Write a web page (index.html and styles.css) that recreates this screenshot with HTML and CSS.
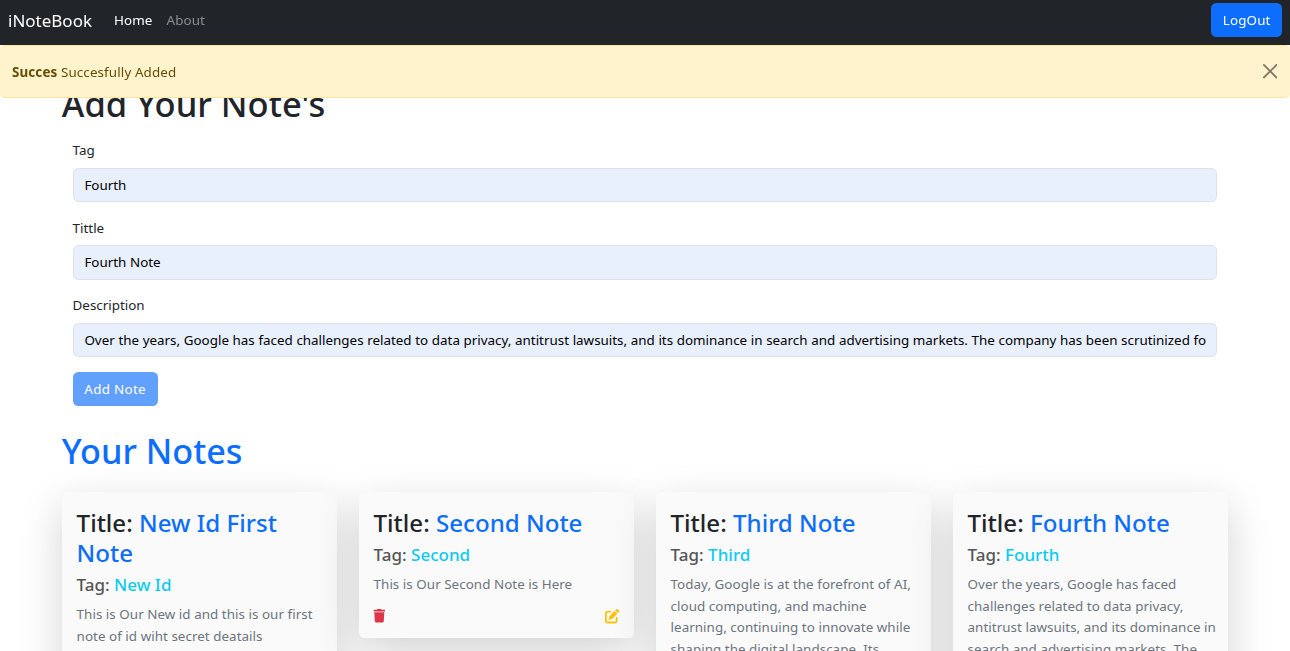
FILE: index.html
```html
<!DOCTYPE html>
<html lang="en">
<head>
<meta charset="utf-8">
<title>iNoteBook</title>
<link rel="stylesheet" href="styles.css">
</head>
<body>
<header class="top">
  <nav class="navbar">
    <a class="brand">iNoteBook</a>
    <a class="nav-link active">Home</a>
    <a class="nav-link">About</a>
    <button class="btn logout">LogOut</button>
  </nav>
  <div class="alert" role="alert">
    <span><strong>Succes</strong> Succesfully Added</span>
    <svg class="close" viewBox="0 0 16 16"><path d="M.293.293a1 1 0 0 1 1.414 0L8 6.586 14.293.293a1 1 0 1 1 1.414 1.414L9.414 8l6.293 6.293a1 1 0 0 1-1.414 1.414L8 9.414l-6.293 6.293a1 1 0 0 1-1.414-1.414L6.586 8 .293 1.707a1 1 0 0 1 0-1.414z"/></svg>
  </div>
</header>
<main class="container">
  <h1 class="heading">Add Your Note's</h1>
  <form class="form">
    <label class="label" for="tag">Tag</label>
    <input class="input" id="tag" value="Fourth">
    <label class="label" for="title">Tittle</label>
    <input class="input" id="title" value="Fourth Note">
    <label class="label" for="desc">Description</label>
    <input class="input" id="desc" value="Over the years, Google has faced challenges related to data privacy, antitrust lawsuits, and its dominance in search and advertising markets. The company has been scrutinized for its practices.">
    <button class="btn add" type="button" disabled>Add Note</button>
  </form>
  <h1 class="heading notes-heading">Your Notes</h1>
  <section class="notes">
    <article class="card">
      <h3 class="title">Title: <span class="title-value">New Id First Note</span></h3>
      <h5 class="tag">Tag: <span class="tag-value">New Id</span></h5>
      <p class="text">This is Our New id and this is our first<br>note of id wiht secret deatails</p>
      <div class="actions">
        <svg class="trash" viewBox="0 0 448 512"><path d="M135 18C140 7 151 0 164 0h120c12 0 23 7 29 18l7 14h96c18 0 32 14 32 32s-14 32-32 32H32C14 96 0 82 0 64s14-32 32-32h96zM32 128h384l-21 339c-2 25-23 45-48 45H101c-25 0-46-20-48-45z"/></svg>
      </div>
    </article>
    <article class="card">
      <h3 class="title">Title: <span class="title-value">Second Note</span></h3>
      <h5 class="tag">Tag: <span class="tag-value">Second</span></h5>
      <p class="text">This is Our Second Note is Here</p>
      <div class="actions">
        <svg class="trash" viewBox="0 0 448 512"><path d="M135 18C140 7 151 0 164 0h120c12 0 23 7 29 18l7 14h96c18 0 32 14 32 32s-14 32-32 32H32C14 96 0 82 0 64s14-32 32-32h96zM32 128h384l-21 339c-2 25-23 45-48 45H101c-25 0-46-20-48-45z"/></svg>
        <svg class="edit" viewBox="0 0 512 512"><path d="M471.6 21.7c-21.9-21.9-57.3-21.9-79.2 0L362.3 51.7l97.9 97.9 30.1-30.1c21.9-21.9 21.9-57.3 0-79.2L471.6 21.7zm-299.2 220c-6.1 6.1-10.8 13.6-13.5 21.9l-29.6 88.8c-2.9 8.6-.6 18.1 5.8 24.6s15.9 8.7 24.6 5.8l88.8-29.6c8.2-2.7 15.7-7.4 21.9-13.5L437.7 172.3 339.7 74.3 172.4 241.7zM96 64C43 64 0 107 0 160V416c0 53 43 96 96 96H352c53 0 96-43 96-96V320c0-17.7-14.3-32-32-32s-32 14.3-32 32v96c0 17.7-14.3 32-32 32H96c-17.7 0-32-14.3-32-32V160c0-17.7 14.3-32 32-32h96c17.7 0 32-14.3 32-32s-14.3-32-32-32H96z"/></svg>
      </div>
    </article>
    <article class="card">
      <h3 class="title">Title: <span class="title-value">Third Note</span></h3>
      <h5 class="tag">Tag: <span class="tag-value">Third</span></h5>
      <p class="text">Today, Google is at the forefront of AI,<br>cloud computing, and machine<br>learning, continuing to innovate while<br>shaping the digital landscape. Its</p>
    </article>
    <article class="card">
      <h3 class="title">Title: <span class="title-value">Fourth Note</span></h3>
      <h5 class="tag">Tag: <span class="tag-value">Fourth</span></h5>
      <p class="text">Over the years, Google has faced<br>challenges related to data privacy,<br>antitrust lawsuits, and its dominance in<br>search and advertising markets. The</p>
    </article>
  </section>
</main>
</body>
</html>
```
FILE: styles.css
```css
* { box-sizing: border-box; }
html, body { height: 100%; overflow: hidden; }
body {
  margin: 0;
  background: #fff;
  color: #212529;
  font-family: "Noto Sans", sans-serif;
  font-size: 13.4px;
  line-height: 21.6px;
}
.top { position: fixed; inset: 0 0 auto; z-index: 2; }
.navbar {
  display: flex;
  align-items: center;
  height: 45px;
  padding: 0 8px 5px;
  background: #212529;
}
.brand { margin-right: 22px; padding-top: 1px; color: #fff; font-size: 17px; }
.nav-link { margin-right: 14px; padding-top: 2px; color: #8b8d8f; letter-spacing: .1px; }
.nav-link.active { color: #fff; }
.btn {
  height: 34px;
  padding: 1px 11.5px 0;
  border: 0;
  border-radius: 5.4px;
  background: #0d6efd;
  color: #fff;
  font: inherit;
  letter-spacing: .12px;
}
.logout { margin-left: auto; }
.alert {
  display: flex;
  align-items: center;
  justify-content: space-between;
  height: 53px;
  padding: 2px 12px 0;
  border: 1px solid #ffe69c;
  border-width: 1px 0;
  border-radius: 5px;
  background: #fff3cd;
  color: #664d03;
  letter-spacing: .12px;
}
.close { width: 14.4px; height: 14.4px; margin: 0 1px 2px 0; fill: #000; opacity: .5; }
.container { width: 1188px; margin: 0 auto; padding: 82px 10.8px 0; }
.heading { margin: 0 0 15px; font-size: 34.5px; line-height: 43.2px; font-weight: 500; }
.form { padding: 0 10.8px; }
.label { display: block; margin-bottom: 6.2px; }
.input {
  display: block;
  width: 100%;
  height: 34.2px;
  margin-bottom: 15.4px;
  padding: 0 10.8px;
  border: 1px solid #dee2e6;
  border-radius: 5.4px;
  background: #e8f0fe;
  color: #000;
  font: inherit;
  word-spacing: .16px;
}
.add { display: block; width: 85px; padding: 2px 0 0; letter-spacing: .3px; opacity: .65; }
.notes-heading { margin: 23px 0 19.4px; font-size: 34.2px; color: #0d6efd; }
.notes { display: grid; grid-template-columns: repeat(4, 275.2px); gap: 21.8px; align-items: start; }
.card {
  position: relative;
  padding: 16px 14.8px 15.3px;
  border-radius: 5.4px;
  background: #fafafa;
  box-shadow: 0 14.4px 43.2px rgba(0, 0, 0, .175);
}
.title { margin: 0 0 5.7px; font-size: 24.1px; line-height: 30.2px; font-weight: 500; }
.title-value { color: #0d6efd; }
.tag { margin: 0 0 8.6px; color: #555; font-size: 17px; line-height: 21.6px; font-weight: 500; }
.tag-value { color: #0dcaf0; }
.text { margin: 0 0 13.9px; color: #6c757d; letter-spacing: .04px; white-space: nowrap; }
.actions { display: flex; justify-content: space-between; height: 13.2px; }
.trash { width: 12.6px; height: 13.4px; margin-left: -1px; fill: #dc3545; }
.edit { width: 14.4px; height: 14.4px; fill: #ffc107; }
```
